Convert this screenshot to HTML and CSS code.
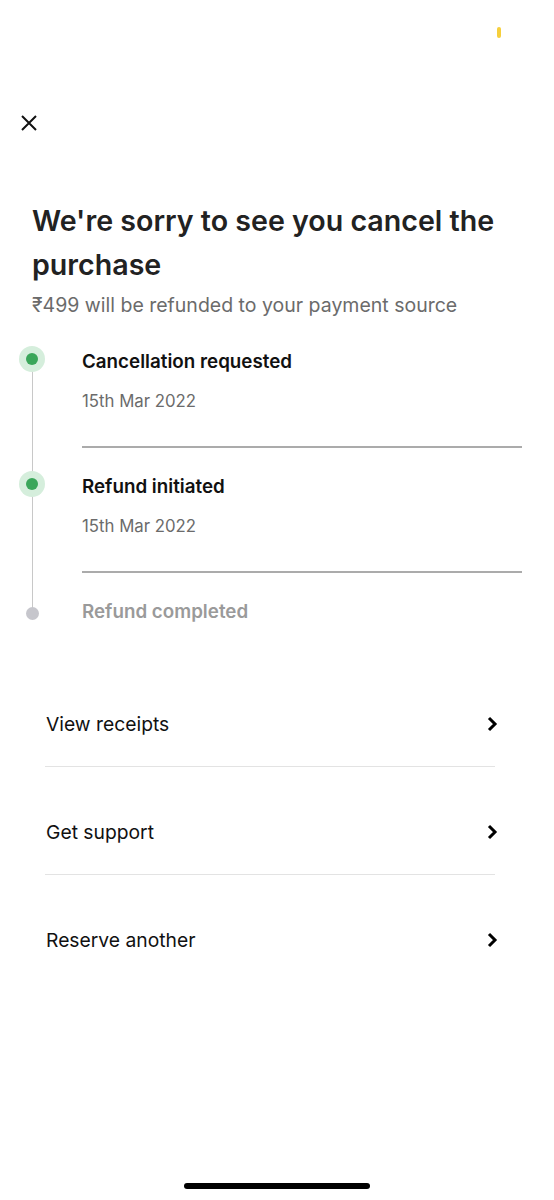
FILE: index.html
```html
<!DOCTYPE html>
<html>
    <head>
        <meta charset="utf-8">
        <meta name="viewport" content="width=device-width, initial-scale=1">
        <link rel="stylesheet" href="styles.css">
    </head>

    <body>
        <!-- status bar -->
        <div class="status-bar">
            <span class="mic-dot"></span>
        </div>

        <!-- close button -->
        <div class="top-bar">
            <button class="close-btn" aria-label="Close">
                <svg width="18" height="18" viewBox="0 0 18 18">
                    <path d="M2 2 L16 16 M16 2 L2 16" stroke="#111" stroke-width="2" fill="none"/>
                </svg>
            </button>
        </div>

        <div class="container">
            <h1 class="title">We're sorry to see you cancel the purchase</h1>
            <p class="subtitle">₹499 will be refunded to your payment source</p>
        </div>

        <!-- refund timeline -->
        <div class="timeline">
            <div class="step done">
                <div class="marker"><span class="dot"></span></div>
                <div class="step-body">
                    <div class="step-title">Cancellation requested</div>
                    <div class="step-date">15th Mar 2022</div>
                    <div class="step-line"></div>
                </div>
            </div>
            <div class="step done">
                <div class="marker"><span class="dot"></span></div>
                <div class="step-body">
                    <div class="step-title">Refund initiated</div>
                    <div class="step-date">15th Mar 2022</div>
                    <div class="step-line"></div>
                </div>
            </div>
            <div class="step pending">
                <div class="marker"><span class="dot"></span></div>
                <div class="step-body">
                    <div class="step-title">Refund completed</div>
                </div>
            </div>
        </div>

        <!-- actions -->
        <ul class="menu">
            <li class="menu-item">
                <span>View receipts</span>
                <svg class="chevron" width="12" height="16" viewBox="0 0 12 16"><path d="M3 2 L9 8 L3 14" stroke="#000" stroke-width="3" fill="none"/></svg>
            </li>
            <li class="menu-item">
                <span>Get support</span>
                <svg class="chevron" width="12" height="16" viewBox="0 0 12 16"><path d="M3 2 L9 8 L3 14" stroke="#000" stroke-width="3" fill="none"/></svg>
            </li>
            <li class="menu-item last">
                <span>Reserve another</span>
                <svg class="chevron" width="12" height="16" viewBox="0 0 12 16"><path d="M3 2 L9 8 L3 14" stroke="#000" stroke-width="3" fill="none"/></svg>
            </li>
        </ul>

        <div class="home-bar"></div>
    </body>
</html>
```

FILE: styles.css
```css
* {box-sizing: border-box}

body {
  margin: 0;
  width: 554px;
  height: 1200px;
  background: #fff;
  font-family: Inter, "Noto Sans", sans-serif;
  color: #111;
  display: flex;
  flex-direction: column;
}

/* status bar */
.status-bar {
  height: 60px;
  display: flex;
  justify-content: flex-end;
  padding: 27px 53px 0 0;
}

.mic-dot {
  width: 4px;
  height: 11px;
  border-radius: 2px;
  background: #f6cf3c;
}

/* close */
.top-bar {
  height: 139px;
  padding: 54px 0 0 19px;
}

.close-btn {
  border: none;
  background: none;
  padding: 0;
  width: 20px;
  height: 20px;
  cursor: pointer;
}

.container {
  padding: 0 32px;
}

.title {
  margin: 0;
  font-size: 28.6px;
  line-height: 44px;
  font-weight: 600;
  color: #222;
}

.subtitle {
  margin: 6px 0 0 0;
  font-size: 19.5px;
  line-height: 24px;
  color: #6b6b6b;
}

/* timeline */
.timeline {
  position: relative;
  margin-top: 28px;
}

.timeline::before {
  content: "";
  position: absolute;
  left: 32px;
  top: 10px;
  height: 262px;
  width: 1px;
  background: #c8c8c8;
}

.step {
  display: grid;
  grid-template-columns: 82px 1fr;
}

.marker {
  position: relative;
}

.dot {
  position: absolute;
  left: 19px;
  top: 1px;
  width: 26px;
  height: 26px;
  border-radius: 50%;
  background: #d5eedc;
}

.dot::after {
  content: "";
  position: absolute;
  left: 7px;
  top: 7px;
  width: 12px;
  height: 12px;
  border-radius: 50%;
  background: #3aa65a;
}

.pending .dot {
  left: 26px;
  top: 12px;
  width: 13px;
  height: 13px;
  background: #c6c6cc;
}

.pending .dot::after {
  display: none;
}

.step-title {
  font-size: 18.8px;
  line-height: 26px;
  font-weight: 600;
  margin-top: 4px;
}

.step-date {
  margin-top: 15px;
  font-size: 16.8px;
  line-height: 22px;
  color: #6b6b6b;
}

.step-line {
  margin: 34px 32px 22px 0;
  height: 2px;
  background: #ababab;
}

.pending .step-title {
  color: #9a9a9a;
}

/* menu */
.menu {
  list-style: none;
  margin: 34px 59px 0 45px;
  padding: 0;
}

.menu-item {
  display: flex;
  justify-content: space-between;
  align-items: center;
  padding: 53px 0 30px 1px;
  font-size: 19.3px;
  line-height: 24px;
  border-bottom: 1px solid #e3e3e3;
  cursor: pointer;
}

.menu-item.last {
  border-bottom: none;
}

.chevron {
  margin-right: -3px;
}

.home-bar {
  margin: auto auto 11px auto;
  width: 186px;
  height: 6px;
  border-radius: 3px;
  background: #000;
}
```
